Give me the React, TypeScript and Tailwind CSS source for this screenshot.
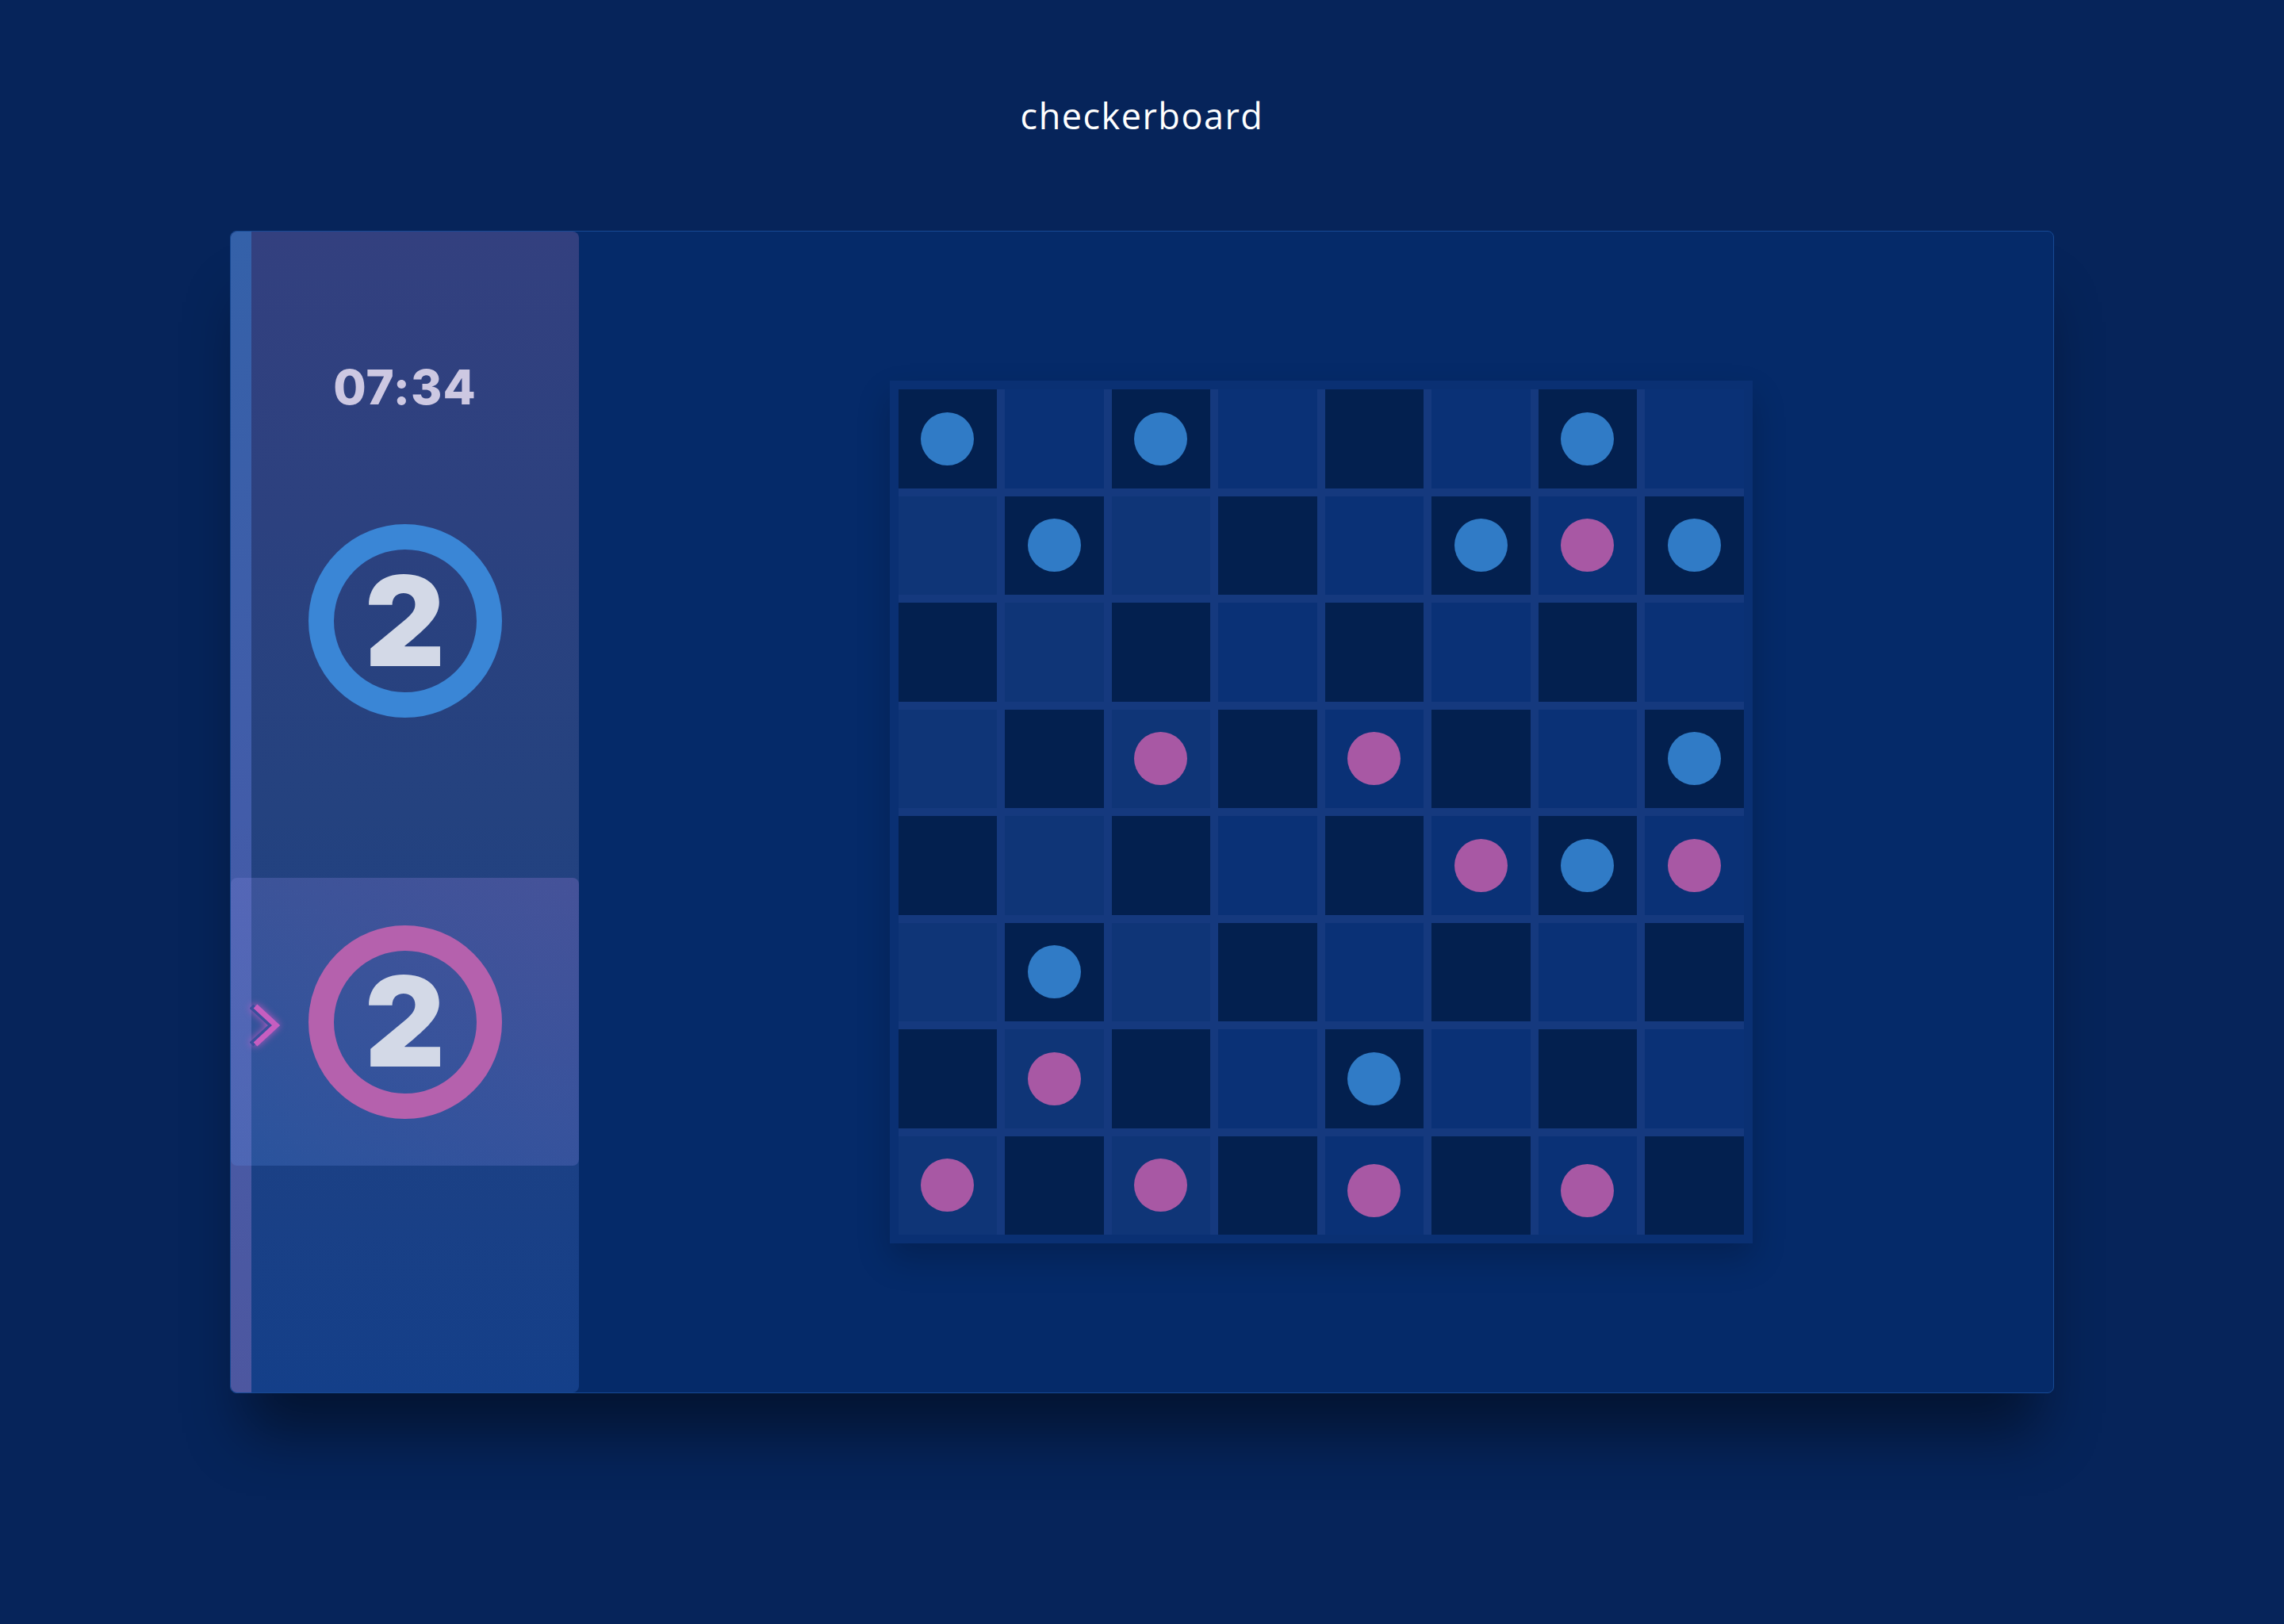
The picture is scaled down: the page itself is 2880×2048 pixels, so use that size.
const board = [
  "B.B...B.",
  ".B...BPB",
  "........",
  "..P.P..B",
  ".....PBP",
  ".B......",
  ".P..B...",
  "P.P.P.P.",
]

function Cell({ row, col, piece }: { row: number; col: number; piece: string }) {
  const dark = (row + col) % 2 === 0
  const shade = dark ? "bg-[#03204f]" : col < 3 && row > 0 ? "bg-[#0f3577]" : "bg-[#0a3176]"
  // last row: two pieces sit a bit low in the reference
  const low = row === 7 && (col === 4 || col === 6)

  return (
    <div className={`flex items-center justify-center ${shade}`}>
      {piece === "B" && <div className={`h-[67px] w-[67px] rounded-full bg-[#307bc6] ${low ? "translate-y-[7px]" : ""}`} />}
      {piece === "P" && <div className={`h-[67px] w-[67px] rounded-full bg-[#a858a4] ${low ? "translate-y-[7px]" : ""}`} />}
    </div>
  )
}

function ScoreRing({ color, value }: { color: string; value: number }) {
  return (
    <div className={`flex h-[244px] w-[244px] items-center justify-center rounded-full border-[32px] ${color}`}>
      <span className="font-['Inter'] text-[157px] font-black leading-none text-[#d3d9e7]">{value}</span>
    </div>
  )
}

export default function App() {
  return (
    <div className="flex min-h-[2048px] w-full flex-col items-center bg-[#06245a] font-['Inter',sans-serif]">
      {/* Title */}
      <h1 className="pt-[123px] font-['Open_Sans'] text-[45px] font-normal leading-none tracking-[1.5px] text-white">
        checkerboard
      </h1>

      {/* Game panel */}
      <div className="mt-[123px] flex h-[1466px] w-[2300px] rounded-lg border border-[#174a95] bg-[#052a69] shadow-[0_70px_70px_-20px_rgba(0,0,0,0.45)]">
        {/* Sidebar */}
        <div className="relative flex w-[439px] flex-col items-center rounded-lg bg-linear-to-b from-[#33407f] via-[#24427f] to-[#143f89]">
          <div className="absolute inset-y-0 left-0 w-[26px] rounded-l-lg bg-linear-to-b from-[#3461a9] via-[#425ca9] to-[#4d57a0]" />

          <div className="relative mt-[166px] text-[60px] font-extrabold leading-none tracking-[1px] text-[#cdc8e2]">
            07:34
          </div>

          <div className="relative mt-[143px]">
            <ScoreRing color="border-[#3a86d6]" value={2} />
          </div>

          {/* Active player */}
          <div className="relative mt-[202px] flex h-[363px] w-full items-center justify-center rounded-lg bg-linear-to-tr from-[#5a96f038] to-[#9678d24d]">
            <svg
              className="absolute left-[24px] top-[158px] drop-shadow-[0_0_5px_rgba(214,90,200,0.8)]"
              width="40"
              height="56"
              viewBox="0 0 40 56"
            >
              <polyline points="2,4 28,28 2,52" fill="none" stroke="#3a4f9c" strokeWidth="7" />
              <polyline points="7,4 33,28 7,52" fill="none" stroke="#c65ec0" strokeWidth="7" />
            </svg>
            <ScoreRing color="border-[#b561ad]" value={2} />
          </div>
        </div>

        {/* Board area */}
        <div className="flex flex-1 items-center justify-center pl-[12px]">
          <div className="bg-[#0a3073] p-[11px] shadow-[0_20px_40px_rgba(0,0,0,0.2)]">
            <div className="grid h-[1066px] w-[1066px] grid-cols-8 grid-rows-8 gap-[10px] bg-[#15397e]">
              {board.map((line, r) =>
                line.split("").map((p, c) => <Cell key={`${r}-${c}`} row={r} col={c} piece={p} />)
              )}
            </div>
          </div>
        </div>
      </div>
    </div>
  )
}
